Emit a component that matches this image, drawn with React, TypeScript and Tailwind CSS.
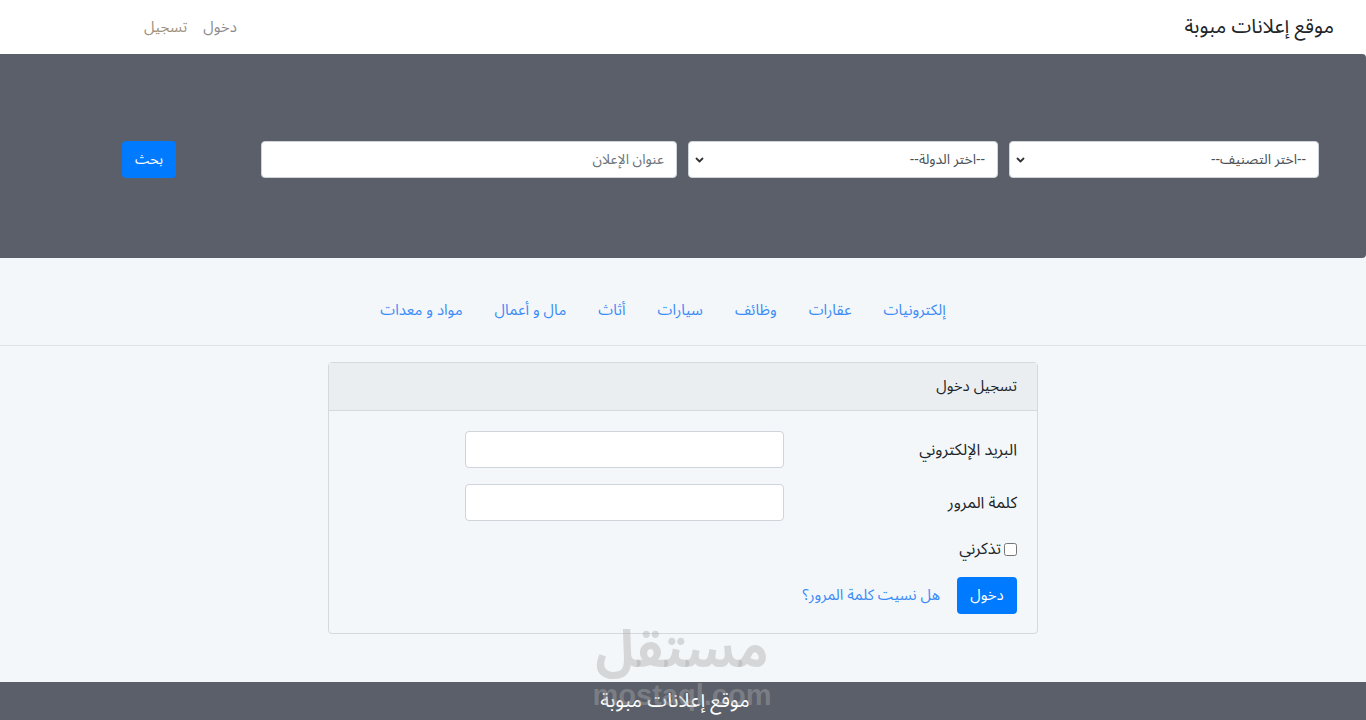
import React from "react"

const categories = ["إلكترونيات", "عقارات", "وظائف", "سيارات", "أثاث", "مال و أعمال", "مواد و معدات"]

const font = "font-['Noto_Sans_Arabic','Noto_Kufi_Arabic','DejaVu_Sans',sans-serif]"

function SelectBox({ label, className }: { label: string; className: string }) {
  return (
    <div className={`relative ${className}`}>
      <select className="h-[37px] w-full appearance-none rounded border border-[#ced4da] bg-white px-3 text-[14px] text-[#495057]">
        <option>{label}</option>
      </select>
      <svg
        className="pointer-events-none absolute left-[7px] top-[15px] h-[8px] w-[9px]"
        viewBox="0 0 9 8"
        fill="none"
      >
        <path d="M1.5 2.5 L4.5 5.5 L7.5 2.5" stroke="#333" strokeWidth="1.8" strokeLinecap="round" strokeLinejoin="round" />
      </svg>
    </div>
  )
}

export default function App() {
  return (
    <div dir="rtl" className={`relative flex min-h-[720px] flex-col bg-[#f4f7fa] ${font}`}>
      {/* top bar */}
      <nav className="flex h-[54px] items-center justify-between bg-white pl-[144px] pr-8">
        <a className="text-[20px] text-[#212529]">موقع إعلانات مبوبة</a>
        <div className="flex items-center gap-4 text-[15px]">
          <a className="text-[#8c8c8c]">دخول</a>
          <a className="text-[#a0927c]">تسجيل</a>
        </div>
      </nav>

      {/* search banner */}
      <div className="flex h-[204px] items-center rounded-r bg-[#5a5f69] pl-[122px] pr-[47px] pt-[7px]">
        <div className="flex w-full items-center">
          <SelectBox label="--اختر التصنيف--" className="w-[310px]" />
          <SelectBox label="--اختر الدولة--" className="mr-[11px] w-[310px]" />
          <input
            placeholder="عنوان الإعلان"
            className="mr-[11px] h-[37px] w-[416px] rounded border border-[#ced4da] bg-white px-3 text-[14px] text-[#495057] placeholder:text-[#6c757d]"
          />
          <button className="mr-auto h-[37px] w-[54px] rounded bg-[#007bff] text-[14px] text-white">بحث</button>
        </div>
      </div>

      {/* categories */}
      <div className="border-b border-[#dee2e6]">
        <ul className="flex h-[87px] items-center justify-center pr-10 pt-[17px]">
          {categories.map((c) => (
            <li key={c}>
              <a className="px-4 text-[15px] text-[#3b8cf7]">{c}</a>
            </li>
          ))}
        </ul>
      </div>

      {/* login card */}
      <div className="flex flex-1 justify-center pt-4">
        <div className="h-[272px] w-[710px] rounded border border-[#d6d9dc]">
          <div className="flex h-[48px] items-center border-b border-[#d6d9dc] bg-[#ebeef1] px-5 text-[15px] text-[#212529]">
            تسجيل دخول
          </div>
          <div className="px-5 pt-5">
            <div className="flex items-center">
              <label className="w-[233px] text-[16px] text-[#212529]">البريد الإلكتروني</label>
              <input className="h-[37px] w-[319px] rounded border border-[#ced4da] bg-white" />
            </div>
            <div className="mt-4 flex items-center">
              <label className="w-[233px] text-[16px] text-[#212529]">كلمة المرور</label>
              <input type="password" className="h-[37px] w-[319px] rounded border border-[#ced4da] bg-white" />
            </div>
            <div className="mt-[16px] flex items-center gap-[3px]">
              <input type="checkbox" className="h-[13px] w-[13px]" />
              <span className="text-[16px] text-[#212529]">تذكرني</span>
            </div>
            <div className="mt-[16px] flex items-center gap-[17px]">
              <button className="h-[37px] w-[60px] rounded bg-[#007bff] text-[15px] text-white">دخول</button>
              <a className="text-[15px] text-[#3b8cf7]">هل نسيت كلمة المرور؟</a>
            </div>
          </div>
        </div>
      </div>

      {/* footer */}
      <footer className="mt-[48px] flex h-[38px] items-center justify-center bg-[#5a5f69] pr-4 text-[20px] text-white">
        موقع إعلانات مبوبة
      </footer>

      {/* watermark */}
      <div className="pointer-events-none absolute left-[598px] top-[622px] z-10 flex w-[168px] flex-col items-center text-[rgba(170,170,170,0.42)]">
        <span className="text-[52px] font-bold leading-[58px]">مستقل</span>
        <span dir="ltr" className="font-['Liberation_Sans',sans-serif] text-[29px] font-bold leading-[30px]">
          mostaql.com
        </span>
      </div>
    </div>
  )
}
